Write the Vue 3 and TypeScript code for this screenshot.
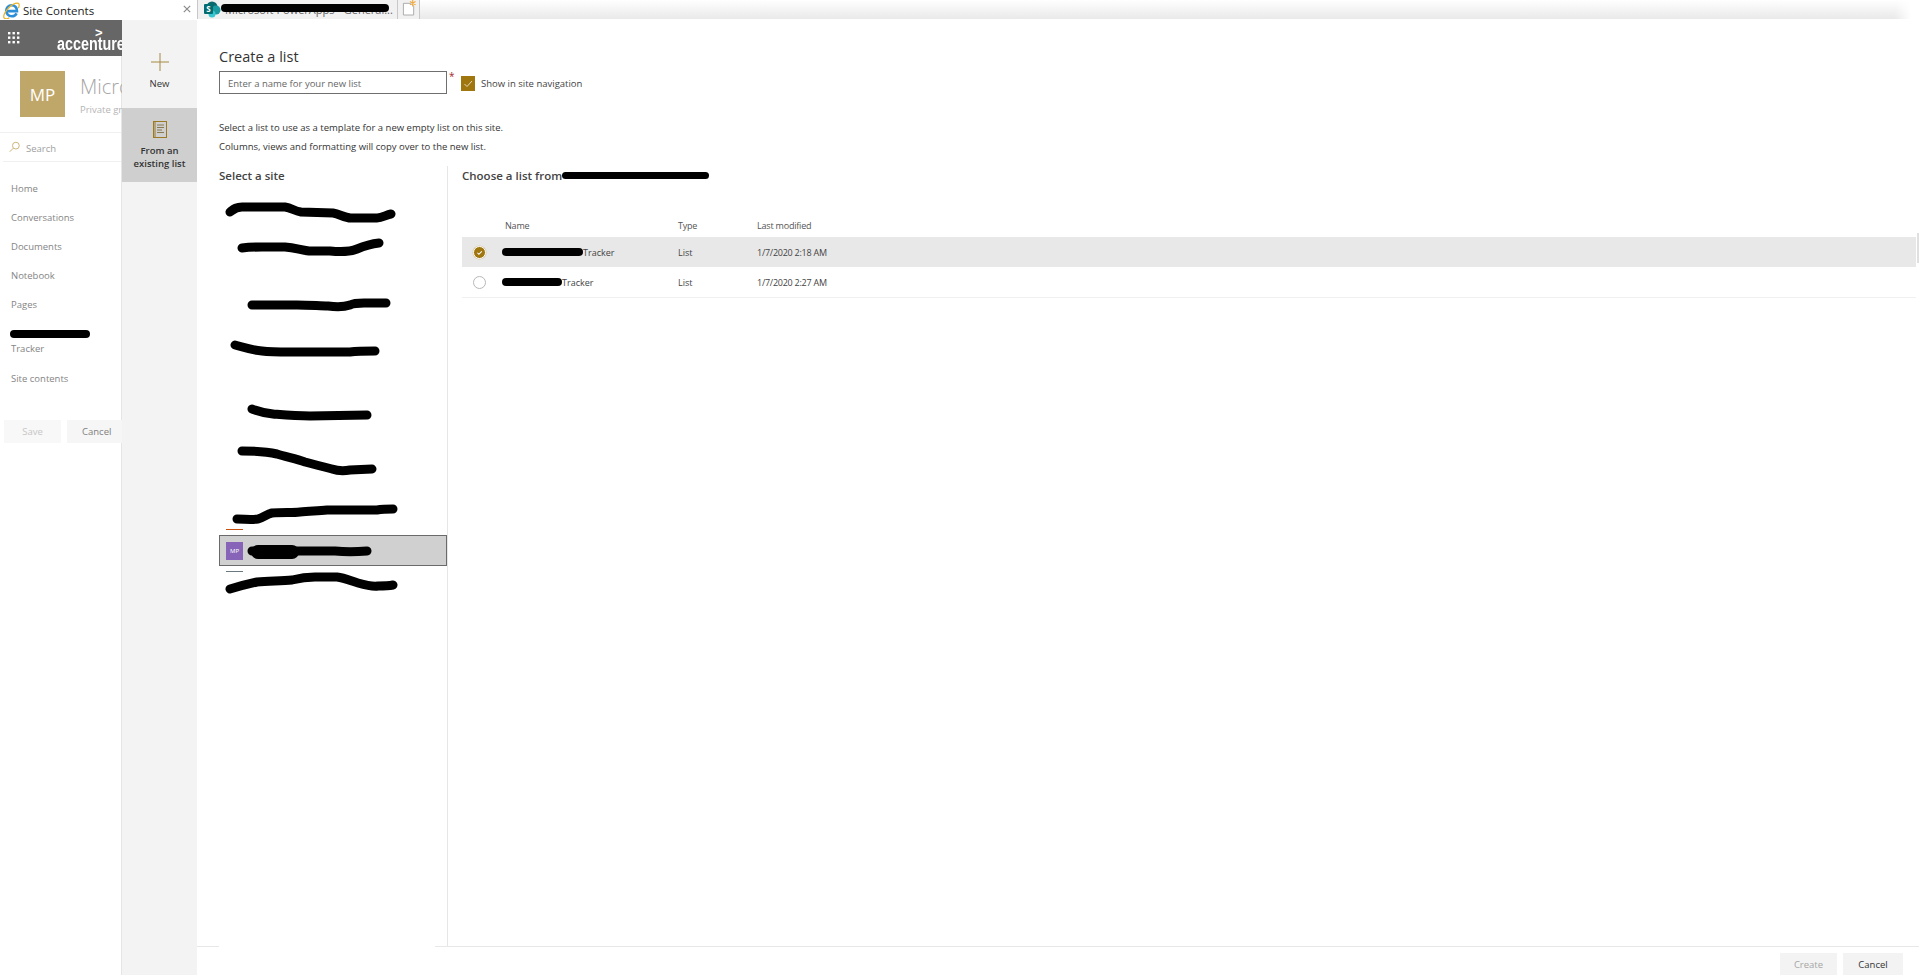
<script setup lang="ts">
const nav = ['Home', 'Conversations', 'Documents', 'Notebook', 'Pages']
const rows = [
  { id: 1, barWidth: 81, date: '1/7/2020 2:18 AM', selected: true },
  { id: 2, barWidth: 60, date: '1/7/2020 2:27 AM', selected: false },
]
const strokes = [
  'M230 213 C234 210 236 208 242 208 L285 208 C292 209 294 212 301 213 L333 214 C340 215 344 219 351 219 L377 219 C382 219 386 216 391 215',
  'M242 249 C250 248 254 248 262 248 L285 248 C296 249 300 251 309 252 L330 252 C340 253 350 253 357 250 C364 247 369 245 379 244',
  'M252 306 L297 306 C310 306 320 307 328 307 C336 308 344 308 350 306 C354 304 358 304 364 304 L386 304',
  'M235 346 C243 348 250 351 262 352 C270 353 280 353 290 353 L350 353 C358 352 365 352 375 352',
  'M252 410 C258 412 262 414 273 415 C285 416 295 417 310 417 L367 416',
  'M242 452 C255 452 268 453 277 455 C287 458 296 460 305 463 C316 466 324 468 332 470 C338 472 344 472 350 471 L372 470',
  'M237 520 C245 520 250 521 258 520 C264 518 267 515 272 514 C284 513 292 514 300 513 C310 512 318 512 327 511 L377 511 C383 510 388 510 393 510',
  'M252 552 L295 552 C310 552 325 552 335 552 C345 553 355 553 367 552',
  'M230 590 C240 587 248 585 257 583 C270 582 282 582 292 581 C300 579 306 578 315 578 L337 578 C345 579 351 582 358 584 C365 586 372 588 378 587 C384 587 388 587 393 586',
]
</script>

<template>
  <div class="page">
    <header class="tabs">
      <div class="tab-active">
        <svg class="ie" viewBox="0 0 18 18" aria-hidden="true">
          <path d="M3.800 9.600h11c.2-3.800-2.200-6.200-5.600-6.200-3.400 0-5.800 2.600-5.800 5.900s2.400 5.800 5.800 5.800c2.400 0 4.300-1.200 5.200-3.100" fill="none" stroke="#2e8fd8" stroke-width="2.800" />
          <path d="M1.200 17C-1 13 7.500 3.200 13 1.500c4.300-1.300 5 1.400 3.200 5M1.200 17c1.200 1.200 3.400 1 5.500-.3" fill="none" stroke="#eab52c" stroke-width="1.300" />
        </svg>
        <span class="tab-title">Site Contents</span>
        <svg class="close" viewBox="0 0 10 10" aria-hidden="true">
          <path d="M1 1l8 8M9 1l-8 8" stroke="#8a8a8a" stroke-width="1.500" />
        </svg>
      </div>
      <div class="tab-other">
        <svg class="sp" viewBox="0 0 17 17" aria-hidden="true">
          <circle cx="8" cy="6" r="5.500" fill="#0b6a6e" />
          <circle cx="12" cy="9" r="4.500" fill="#1a9ba1" />
          <circle cx="8" cy="13" r="3.500" fill="#37c6d0" />
          <rect x="0" y="3" width="9" height="10" rx="1" fill="#036c70" />
          <text x="4.500" y="11" text-anchor="middle" class="sp-s">S</text>
        </svg>
        <span class="tab-other-text">Microsoft PowerApps - General...</span>
        <span class="tab-redact"></span>
      </div>
      <div class="tab-new">
        <svg viewBox="0 0 15 17" aria-hidden="true">
          <path d="M1.500 3.500h8l3 3v9.500h-11z" fill="#fff" stroke="#a8a8a8" />
          <path d="M11.500 0v7M8.500 1.500l6 3.500M14.500 1.500l-6 3.500" stroke="#f2a93b" stroke-width="1.200" />
        </svg>
      </div>
      <div class="tab-fill"></div>
    </header>

    <div class="workspace">
      <aside class="site-panel">
        <div class="suite-bar">
          <svg class="waffle" viewBox="0 0 12 12" aria-hidden="true">
            <g fill="#fff">
              <rect x="0" y="0" width="2.400" height="2.400" /><rect x="4.500" y="0" width="2.400" height="2.400" /><rect x="9" y="0" width="2.400" height="2.400" />
              <rect x="0" y="4.500" width="2.400" height="2.400" /><rect x="4.500" y="4.500" width="2.400" height="2.400" /><rect x="9" y="4.500" width="2.400" height="2.400" />
              <rect x="0" y="9" width="2.400" height="2.400" /><rect x="4.500" y="9" width="2.400" height="2.400" /><rect x="9" y="9" width="2.400" height="2.400" />
            </g>
          </svg>
          <div class="brand">
            <span class="brand-mark">&gt;</span>
            <span class="brand-name">accenture</span>
          </div>
        </div>
        <div class="panel-body">
          <div class="site-head">
            <div class="tile">MP</div>
            <div class="site-text">
              <div class="site-name">Microsoft</div>
              <div class="site-kind">Private group</div>
            </div>
          </div>
          <div class="search">
            <svg viewBox="0 0 12 12" aria-hidden="true">
              <circle cx="7.500" cy="4.500" r="3.700" fill="none" stroke="#c9ae6d" />
              <path d="M4.800 7.200L.8 11.200" stroke="#c9ae6d" />
            </svg>
            <span>Search</span>
          </div>
          <nav class="nav">
            <div v-for="item in nav" :key="item" class="nav-item">{{ item }}</div>
            <div class="nav-item"><span class="bar nav-bar"></span><br />Tracker</div>
            <div class="nav-item nav-last">Site contents</div>
          </nav>
          <div class="panel-actions">
            <button class="btn-save" type="button">Save</button>
            <button class="btn-cancel" type="button">Cancel</button>
          </div>
        </div>
      </aside>

      <div class="rail">
        <div class="rail-item">
          <svg class="rail-plus" viewBox="0 0 18 18" aria-hidden="true">
            <path d="M9 0v18M0 9h18" stroke="#a58a45" stroke-width="1" />
          </svg>
          <span>New</span>
        </div>
        <div class="rail-item rail-selected">
          <svg class="rail-doc" viewBox="0 0 14 17" aria-hidden="true">
            <rect x=".5" y=".5" width="13" height="16" fill="none" stroke="#9c7a24" />
            <path d="M2 1v15" stroke="#9c7a24" />
            <path d="M4 4h7M4 6.500h7M4 9h5M4 11.500h7" stroke="#8a7a50" />
          </svg>
          <span>From an<br />existing list</span>
        </div>
      </div>

      <main class="main">
        <div class="content">
          <h1 class="title">Create a list</h1>
          <div class="form-row">
            <input class="name-input" type="text" placeholder="Enter a name for your new list" />
            <span class="required">*</span>
            <span class="check">
              <svg viewBox="0 0 14 14" aria-hidden="true">
                <path d="M3.500 7.500l2.500 2.500 5-5.500" fill="none" stroke="#e6d9b8" stroke-width="1" />
              </svg>
            </span>
            <span class="check-label">Show in site navigation</span>
          </div>
          <div class="intro">
            <p>Select a list to use as a template for a new empty list on this site.</p>
            <p>Columns, views and formatting will copy over to the new list.</p>
          </div>
          <div class="columns">
            <section class="col-sites">
              <h2 class="col-title">Select a site</h2>
              <div class="accent accent-orange"></div>
              <div class="site-row">
                <span class="site-icon">MP</span>
              </div>
              <div class="accent accent-grey"></div>
              <svg class="scribble" viewBox="219 167 228 440" aria-hidden="true">
                <path v-for="(d, i) in strokes" :key="i" :d="d" />
                <path class="scribble-thick" d="M258 553 L292 553" />
              </svg>
            </section>
            <section class="col-lists">
              <h2 class="col-title">Choose a list from<span class="bar title-bar"></span></h2>
              <div class="grid-row grid-head">
                <span></span><span>Name</span><span>Type</span><span>Last modified</span>
              </div>
              <div v-for="row in rows" :key="row.id" class="grid-row list-row" :class="{ selected: row.selected }">
                <span class="radio" :class="{ on: row.selected }">
                  <svg v-if="row.selected" viewBox="0 0 13 13" aria-hidden="true">
                    <path d="M4 6.800l1.800 1.800 3.400-3.400" fill="none" stroke="#fff" stroke-width="1.200" />
                  </svg>
                </span>
                <span class="name-cell"><span class="bar" :style="{ width: row.barWidth + 'px' }"></span>Tracker</span>
                <span class="cell-type">List</span>
                <span class="cell-date">{{ row.date }}</span>
              </div>
              <div class="scroll-thumb"></div>
            </section>
          </div>
        </div>
        <footer class="footer">
          <div class="footer-rule">
            <span class="rule rule-short"></span>
            <span class="rule rule-long"></span>
          </div>
          <div class="footer-actions">
            <button class="btn-create" type="button">Create</button>
            <button class="btn-close" type="button">Cancel</button>
          </div>
        </footer>
      </main>
    </div>
  </div>
</template>

<style>
html, body { margin: 0; background: #fff; }
</style>

<style scoped>
.page {
  width: 1919px;
  height: 977px;
  display: flex;
  flex-direction: column;
  overflow: hidden;
  font-family: "Open Sans", "Noto Sans", sans-serif;
  font-size: 9.500px;
  color: #333;
  background: #fff;
}
.tabs { height: 20px; display: flex; flex: none; }
.tab-active { width: 197px; display: flex; align-items: center; padding: 0 5px 0 3px; box-sizing: border-box; }
.ie { width: 17px; height: 17px; flex: none; }
.tab-title { margin-left: 3px; font-size: 11.500px; color: #222; flex: 1; }
.close { width: 8px; height: 8px; margin-right: 1px; margin-top: -3px; }
.tab-other {
  width: 201px;
  height: 19px;
  position: relative;
  display: flex;
  align-items: center;
  padding-left: 6px;
  box-sizing: border-box;
  background: #f1f1f1;
  border-left: 1px solid #c8c8c8;
  border-right: 1px solid #c8c8c8;
  overflow: hidden;
}
.sp { width: 17px; height: 17px; flex: none; }
.sp-s { font-size: 8px; font-weight: 700; fill: #fff; font-family: "Open Sans", sans-serif; }
.tab-other-text { margin-left: 4px; font-size: 11px; color: #666; white-space: nowrap; }
.tab-redact {
  position: absolute;
  left: 23px;
  top: 4px;
  width: 168px;
  height: 8px;
  border-radius: 4px;
  background: #000;
}
.tab-new {
  width: 21px;
  height: 19px;
  display: flex;
  justify-content: center;
  background: #f1f1f1;
  border-right: 1px solid #c8c8c8;
}
.tab-new svg { width: 14px; height: 16px; margin-top: 0; }
.tab-fill {
  flex: 1;
  height: 19px;
  margin-right: 8px;
  background: linear-gradient(to bottom, #fff, #e9e9e9);
  mask-image: linear-gradient(to right, #000 calc(100% - 16px), transparent);
}
.workspace { flex: 1; display: flex; min-height: 0; }
.site-panel { width: 122px; flex: none; display: flex; flex-direction: column; overflow: hidden; }
.suite-bar {
  height: 36px;
  flex: none;
  display: flex;
  align-items: center;
  background: #666;
  padding-left: 8px;
}
.waffle { width: 12px; height: 12px; flex: none; }
.brand {
  margin-left: 37px;
  padding-top: 3px;
  display: flex;
  flex-direction: column;
  align-items: flex-start;
  color: #fff;
  width: 78px;
  flex: none;
  white-space: nowrap;
}
.brand-mark { font: 700 13px/9px "Liberation Sans", sans-serif; margin-left: 38px; }
.brand-name {
  font: 700 17.500px/15px "Liberation Sans", sans-serif;
  transform: scaleX(.82);
  transform-origin: left center;
}
.panel-body {
  flex: 1;
  margin-bottom: 2px;
  border-right: 1px solid #e5e5e5;
  display: flex;
  flex-direction: column;
  color: #8a8a8a;
}
.site-head {
  display: flex;
  gap: 15px;
  padding: 15px 0 15px 20px;
  border-bottom: 1px solid #f0f0f0;
  white-space: nowrap;
}
.tile {
  width: 45px;
  height: 46px;
  flex: none;
  background: #bfa76a;
  color: #fff;
  font-size: 17px;
  display: flex;
  align-items: center;
  justify-content: center;
}
.site-text { min-width: 0; }
.site-name { font-size: 20px; line-height: 32px; font-weight: 300; color: #a6a6a6; }
.site-kind { font-size: 9.500px; line-height: 14px; margin-top: 0; color: #b5b5b5; }
.search {
  height: 29px;
  display: flex;
  align-items: center;
  gap: 6px;
  border-bottom: 1px solid #f0f0f0;
  margin-left: 3px;
  padding: 2px 0 0 6px;
  box-sizing: border-box;
  color: #a0a0a0;
}
.search svg { width: 11px; height: 12px; margin-top: -3px; }
.nav { padding: 12px 0 0 11px; }
.nav-item { padding: 7px 0; line-height: 15px; color: #858585; }
.nav-last { margin-top: 1px; }
.nav-bar { width: 80px; height: 7px; margin-left: -1px; }
.bar {
  display: inline-block;
  height: 8px;
  border-radius: 4px;
  background: #000;
  vertical-align: middle;
}
.panel-actions { display: flex; gap: 6px; margin: 27px 0 0 4px; white-space: nowrap; }
.panel-actions button {
  height: 23px;
  border: 0;
  padding: 0;
  font: inherit;
  flex: none;
}
.btn-save { width: 57px; background: #f8f8f8; color: #c6c6c6; }
.btn-cancel { width: 55px; background: #f6f6f6; color: #808080; text-align: left; padding-left: 15px !important; }
.rail {
  width: 75px;
  flex: none;
  margin-bottom: 2px;
  background: #f3f3f3;
  text-align: center;
  color: #333;
}
.rail-item { display: flex; flex-direction: column; align-items: center; }
.rail-item:first-child { height: 88px; box-sizing: border-box; padding-top: 33px; }
.rail-plus { width: 18px; height: 18px; margin-bottom: 6px; }
.rail-item:first-child span { line-height: 14px; }
.rail-selected { height: 74px; background: #cfcfcf; box-sizing: border-box; padding-top: 13px; font-weight: 600; }
.rail-selected span { line-height: 13px; margin-top: 6px; }
.rail-doc { width: 14px; height: 17px; }
.main { flex: 1; display: flex; flex-direction: column; min-width: 0; }
.content {
  flex: 1;
  min-height: 0;
  display: flex;
  flex-direction: column;
  padding: 27px 3px 0 22px;
}
.title { margin: 0; font-size: 14.500px; line-height: 20px; font-weight: 500; color: #333; }
.form-row { display: flex; align-items: center; margin-top: 4px; height: 23px; }
.name-input {
  width: 228px;
  height: 23px;
  box-sizing: border-box;
  border: 1px solid #6f6f6f;
  padding: 1px 8px 0;
  font: inherit;
  outline: none;
}
.name-input::placeholder { color: #666; opacity: 1; }
.required { color: #a4262c; width: 14px; padding-left: 2px; box-sizing: border-box; font-size: 10px; align-self: flex-start; line-height: 10px; }
.check { width: 14px; height: 15px; background: #a0760f; flex: none; margin-top: 1px; }
.check svg { display: block; width: 14px; height: 15px; }
.check-label { margin-left: 6px; margin-top: 1px; color: #444; }
.intro { margin-top: 24px; }
.intro p { margin: 0; line-height: 19px; color: #333; }
.columns { flex: 1; min-height: 0; display: flex; margin-top: 10px; }
.col-sites { width: 228px; flex: none; position: relative; }
.col-lists { flex: 1; min-width: 0; border-left: 1px solid #e6e6e6; padding-left: 14px; position: relative; }
.col-title { margin: 0; padding-top: 1px; font-size: 11.500px; line-height: 18px; font-weight: 600; color: #444; }
.accent { width: 17px; height: 1px; margin-left: 7px; }
.accent-orange { background: #ca5010; margin-top: 344px; }
.accent-grey { background: #69797e; margin-top: 5px; }
.site-row {
  height: 31px;
  margin-top: 5px;
  box-sizing: border-box;
  background: #d0d0d0;
  border: 1px solid #6a6a6a;
  display: flex;
  align-items: center;
  padding-left: 6px;
}
.site-icon {
  width: 17px;
  height: 18px;
  background: #8764b8;
  color: #fff;
  font-size: 6px;
  display: flex;
  align-items: center;
  justify-content: center;
}
.scribble {
  position: absolute;
  left: 0;
  top: 0;
  width: 228px;
  height: 440px;
  overflow: visible;
  pointer-events: none;
}
.scribble path { fill: none; stroke: #000; stroke-width: 9; stroke-linecap: round; stroke-linejoin: round; }
.scribble path.scribble-thick { stroke-width: 14; }
.title-bar { width: 147px; height: 7px; margin-top: -2px; }
.grid-row {
  display: grid;
  grid-template-columns: 43px 173px 79px 1fr;
  align-items: center;
}
.grid-head {
  margin-top: 30px;
  height: 21px;
  padding-bottom: 1px;
  color: #555;
  font-size: 9px;
  letter-spacing: -.2px;
}
.list-row { height: 30px; border-bottom: 1px solid #f0f0f0; color: #444; box-sizing: content-box; font-size: 9px; }
.list-row.selected { background: #e8e8e8; border-bottom: 0; height: 30px; }
.cell-date { letter-spacing: -.25px; }
.radio {
  width: 13px;
  height: 13px;
  margin-left: 11px;
  box-sizing: border-box;
  border: 1px solid #b8b8b8;
  border-radius: 50%;
  background: #fff;
}
.radio.on { background: #a0760f; border: 1px solid #fff; box-shadow: 0 0 0 .5px #d6c9a4; }
.radio svg { display: block; width: 11px; height: 11px; }
.name-cell { margin-left: -3px; white-space: nowrap; display: flex; align-items: center; }
.scroll-thumb {
  position: absolute;
  right: -3px;
  top: 67px;
  width: 2px;
  height: 30px;
  background: #e0e0e0;
}
.footer { height: 31px; flex: none; }
.footer-rule { display: flex; height: 1px; }
.rule { height: 1px; background: #e8e8e8; display: block; }
.rule-short { width: 22px; }
.rule-long { flex: 1; margin-left: 216px; }
.footer-actions { display: flex; justify-content: flex-end; gap: 6px; padding: 6px 16px 0 0; }
.footer-actions button { height: 22px; border: 0; background: #f3f3f3; font: inherit; padding: 0; }
.btn-create { width: 57px; color: #a6a6a6; }
.btn-close { width: 60px; color: #333; }
</style>
